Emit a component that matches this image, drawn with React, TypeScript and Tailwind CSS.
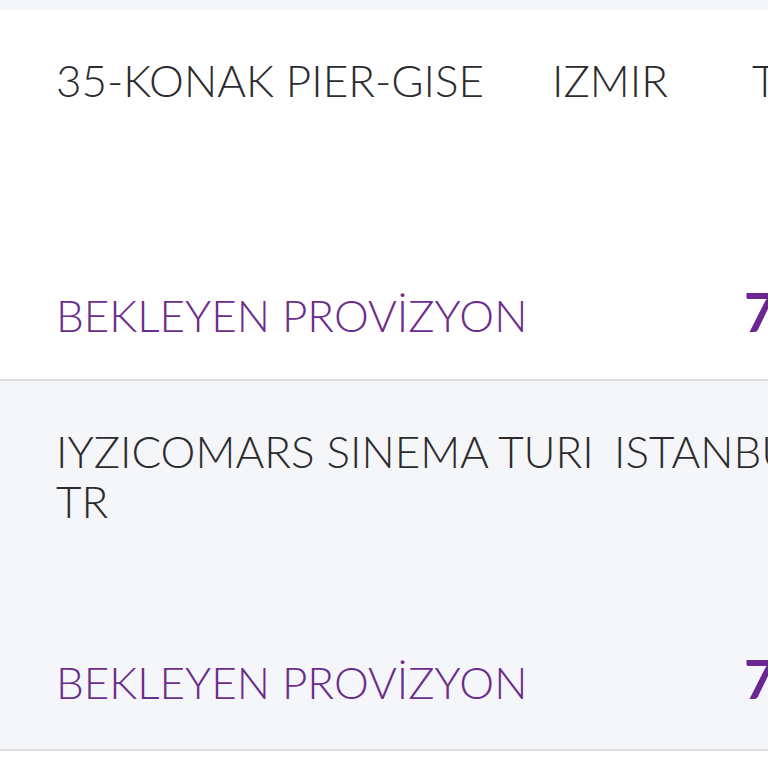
const purple = "text-[#6b2d8c]";

function StatusLine() {
  return (
    <div className="flex items-baseline whitespace-nowrap">
      <span className={`w-[688px] shrink-0 text-[44px] leading-[52px] font-light ${purple}`}>
        BEKLEYEN PROVİZYON
      </span>
      <span className="text-[54px] leading-[60px] font-bold text-[#6a2791]">7,50 TL</span>
    </div>
  );
}

export default function App() {
  return (
    <div className="w-[768px] h-[768px] overflow-hidden bg-white font-['Lato','Open_Sans',sans-serif] text-[#2b2b2e]">
      <div className="h-[10px] bg-[#f5f6f8]" />

      <div className="h-[371px] bg-white border-b-2 border-[#dcdde3] flex flex-col justify-between pl-[56px] pt-[45px] pb-[37px]">
        <div className="flex whitespace-nowrap text-[44px] leading-[50px] font-light">
          <span className="w-[496px] shrink-0">35-KONAK PIER-GISE</span>
          <span className="w-[200px] shrink-0">IZMIR</span>
          <span>TR</span>
        </div>
        <StatusLine />
      </div>

      <div className="h-[370px] bg-[#f5f6f9] border-b-2 border-[#dcdde3] flex flex-col justify-between pl-[56px] pt-[45px] pb-[40px]">
        <div className="whitespace-nowrap text-[44px] leading-[50px] font-light">
          <div className="flex">
            <span className="w-[558px] shrink-0">IYZICOMARS SINEMA TURI</span>
            <span>ISTANBUL</span>
          </div>
          <div>TR</div>
        </div>
        <StatusLine />
      </div>
    </div>
  );
}
